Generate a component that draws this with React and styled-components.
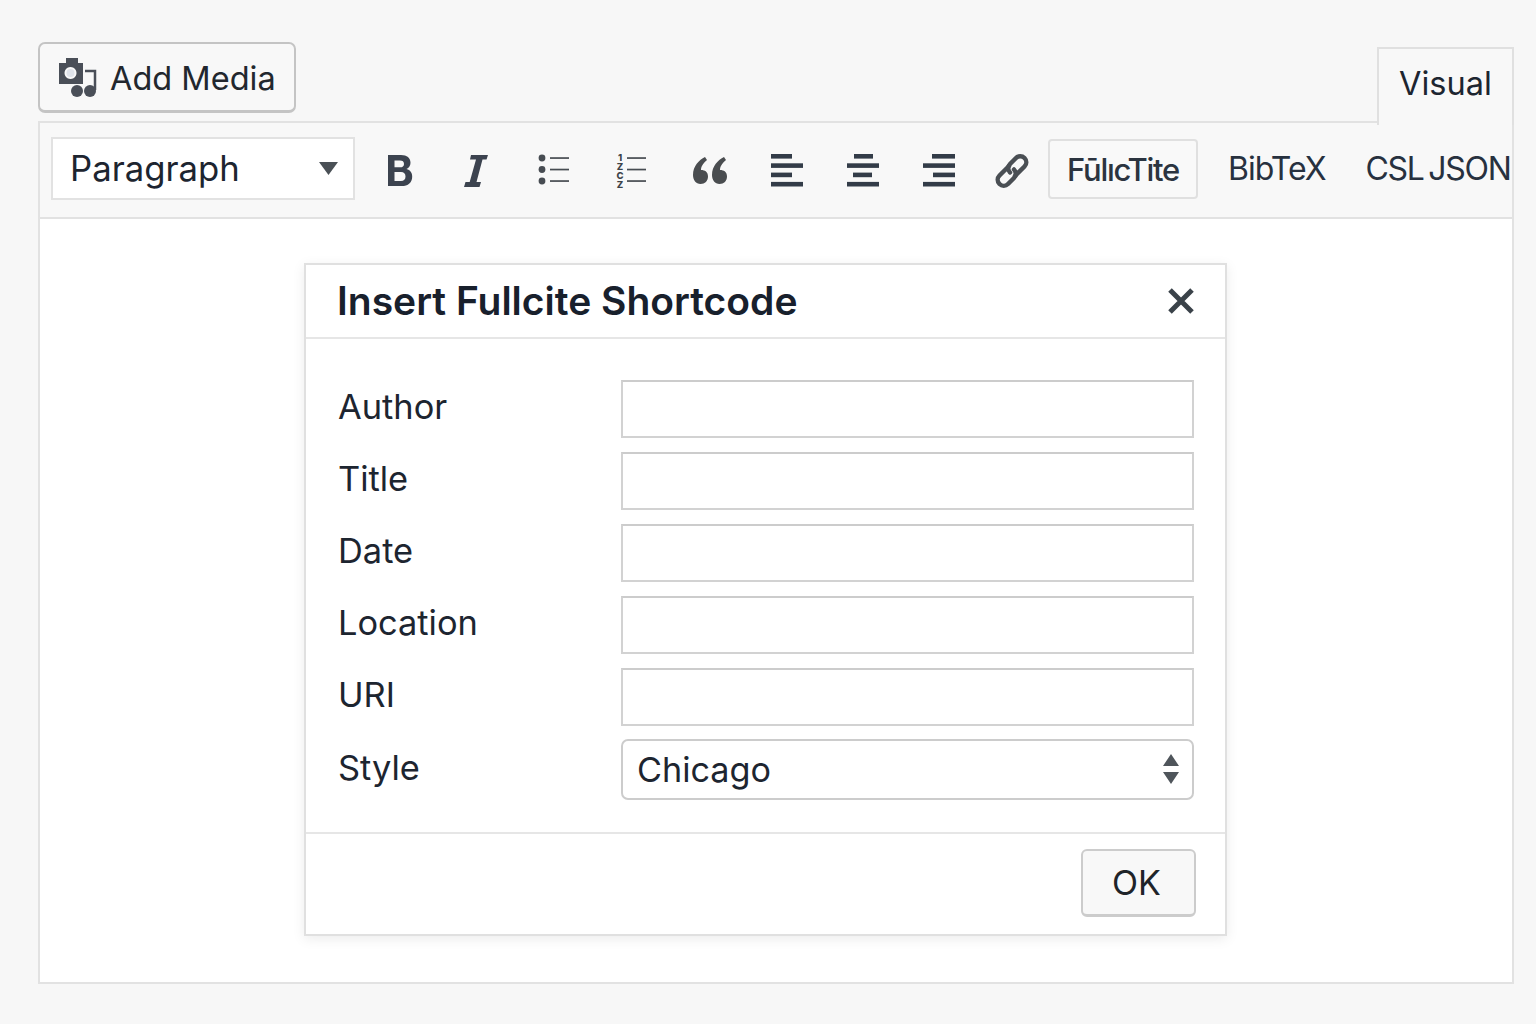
import React from "react";
import styled, { createGlobalStyle } from "styled-components";

const Global = createGlobalStyle`
  html, body { margin: 0; padding: 0; background: #f7f7f7; }
  body { font-family: Inter, "Liberation Sans", sans-serif; color: #1d2530; }
  * { box-sizing: border-box; }
`;

const Page = styled.div`
  width: 1536px;
  height: 1024px;
  padding: 42px 22px 0 38px;
  background: #f7f7f7;
  overflow: hidden;
`;
const TopRow = styled.div`
  display: flex;
  justify-content: space-between;
  align-items: flex-start;
  height: 79px;
`;
const MediaButton = styled.button`
  width: 258px;
  height: 71px;
  display: flex;
  align-items: center;
  gap: 12px;
  padding: 2px 0 0 18px;
  background: #f8f8f8;
  border: 2px solid #c4c4c4;
  border-bottom-width: 3px;
  border-radius: 7px;
  font: 400 32.5px Inter, sans-serif;
  color: #22272e;
`;
const Tab = styled.div`
  position: relative;
  z-index: 1;
  width: 137px;
  height: 78px;
  margin-top: 5px;
  padding: 14px 0 0 20px;
  background: #f8f8f8;
  border: 2px solid #e0e0e0;
  border-bottom: none;
  font-size: 32.5px;
  line-height: 42px;
  color: #1d2530;
`;
const Editor = styled.div`
  height: 863px;
  background: #fff;
  border: 2px solid #e2e2e2;
`;
const Toolbar = styled.div`
  height: 96px;
  display: flex;
  align-items: center;
  padding: 2px 0 2px 11px;
  background: #f8f8f8;
  border-bottom: 2px solid #e2e2e2;
`;
const FormatSelect = styled.div`
  flex: none;
  width: 304px;
  height: 63px;
  margin-top: -4px;
  display: flex;
  align-items: center;
  justify-content: space-between;
  padding: 0 15px 0 17px;
  background: #fff;
  border: 2px solid #e2e2e2;
  font-size: 34.7px;
  color: #1d2530;
`;
const Icons = styled.div`
  flex: none;
  display: flex;
  align-items: center;
  margin-left: 7px;
`;
const IconSlot = styled.div`
  width: ${(p) => p.$w}px;
  height: 40px;
  display: flex;
  align-items: center;
  justify-content: center;
  margin-top: 2px;
`;
const FullciteButton = styled.div`
  flex: none;
  width: 150px;
  height: 60px;
  display: flex;
  align-items: center;
  justify-content: center;
  background: #f9f9f9;
  border: 2px solid #e0e0e0;
  border-radius: 4px;
  font-size: 31px;
  font-weight: 500;
  letter-spacing: -1.3px;
  color: #2b3440;
  padding-top: 2px;
  margin-top: -3px;
`;
const TextTool = styled.div`
  flex: none;
  margin-left: ${(p) => p.$ml}px;
  font-size: 32px;
  letter-spacing: ${(p) => p.$ls}px;
  word-spacing: -3px;
  color: #27313f;
  white-space: nowrap;
  margin-top: -4px;
`;
const Content = styled.div`
  padding: 44px 0 0 264px;
`;
const Modal = styled.div`
  width: 923px;
  height: 673px;
  display: flex;
  flex-direction: column;
  background: #fff;
  border: 2px solid #e0e0e0;
  box-shadow: 0 3px 12px rgba(0, 0, 0, 0.08);
`;
const ModalHeader = styled.div`
  height: 74px;
  display: flex;
  align-items: center;
  justify-content: space-between;
  padding: 0 30px 0 31px;
  border-bottom: 2px solid #e6e6e6;
`;
const ModalTitle = styled.h2`
  margin: -2px 0 0;
  font-size: 39px;
  font-weight: 600;
  color: #18202c;
`;
const ModalBody = styled.div`
  flex: 1;
  display: flex;
  flex-direction: column;
  gap: 14px;
  padding: 41px 31px 0 32px;
`;
const Row = styled.div`
  display: grid;
  grid-template-columns: 283px 573px;
  align-items: center;
  height: ${(p) => p.$h || 58}px;
  margin-top: ${(p) => p.$mt || 0}px;
`;
const Label = styled.label`
  font-size: 34.4px;
  color: #1d2530;
  margin-top: -5px;
`;
const Input = styled.input`
  width: 573px;
  height: 58px;
  background: #fff;
  border: 2px solid #d2d2d2;
  border-top-color: #cccccc;
  outline: none;
`;
const StyleSelect = styled.div`
  width: 573px;
  height: 61px;
  display: flex;
  align-items: center;
  justify-content: space-between;
  padding: 0 13px 0 14px;
  background: #fff;
  border: 2px solid #cccccc;
  border-radius: 7px;
  font-size: 34.2px;
  color: #1d2530;
`;
const ModalFooter = styled.div`
  height: 102px;
  display: flex;
  align-items: flex-start;
  justify-content: flex-end;
  padding: 15px 29px 0 0;
  border-top: 2px solid #e6e6e6;
`;
const OkButton = styled.button`
  width: 115px;
  height: 68px;
  padding: 0 4px 0 0;
  background: #f8f8f8;
  border: 2px solid #cccccc;
  border-bottom-width: 3px;
  border-radius: 6px;
  font: 400 34px Inter, sans-serif;
  color: #1f2429;
`;

const MediaIcon = () => (
  <svg width="40" height="40" viewBox="0 0 40 40">
    <path fill="#4a4f58" fillRule="evenodd" d="M8 0h12v5h5v21H1V5h7zM12.5 9a6 6 0 1 0 .01 0z" />
    <circle cx="12.5" cy="15" r="4" fill="#dfe3ea" />
    <path fill="none" stroke="#4a4f58" strokeWidth="2.5" d="M27 13h10v19" />
    <circle cx="19" cy="33" r="6" fill="#4a4f58" />
    <circle cx="32" cy="33" r="6" fill="#4a4f58" />
  </svg>
);
const Caret = () => (
  <svg width="19" height="13" viewBox="0 0 19 13"><path fill="#4a5056" d="M0 0h19l-9.500 13z" /></svg>
);
const BoldIcon = () => (
  <svg width="26" height="34" viewBox="0 0 26 34">
    <path fill="#3c434f" fillRule="evenodd" d="M1 1h13c6 0 9.500 3 9.500 7.800 0 3-1.500 5.200-4 6.300 3.700.9 5.700 3.700 5.700 7.300 0 6-4 9.600-10.700 9.600H1zM7.500 6.500v6.800H13c2.600 0 4-1.200 4-3.400s-1.400-3.400-4-3.400zM7.500 18v9H14c2.900 0 4.500-1.600 4.500-4.500S16.900 18 14 18z" />
  </svg>
);
const ItalicIcon = () => (
  <svg width="26" height="34" viewBox="0 0 26 34">
    <path fill="#3c434f" d="M8 1h17l-1.500 4.500h-4L13.500 28h4.500L16.500 33H1l1.500-5h4.200l6.300-22.500H7z" />
  </svg>
);
const BulletIcon = () => (
  <svg width="34" height="34" viewBox="0 0 34 34">
    {[4, 15.5, 27].map((y) => <circle key={y} cx="5" cy={y} r="3.400" fill="#474c52" />)}
    {[4, 15.5, 27].map((y) => <rect key={y} x="13" y={y - 0.8} width="19" height="1.700" fill="#474c52" />)}
  </svg>
);
const NumberIcon = () => (
  <svg width="34" height="38" viewBox="0 -2 34 38">
    {["1", "Z", "C", "Z"].map((c, i) => (
      <text key={i} x="5" y={7 + i * 9} textAnchor="middle" fontSize="9.500" fontWeight="800" fontFamily="Inter, sans-serif" fill="#3d4349">{c}</text>
    ))}
    {[4, 15.5, 27].map((y) => <rect key={y} x="12" y={y - 0.8} width="19" height="1.700" fill="#474c52" />)}
  </svg>
);
const QuoteIcon = () => (
  <svg width="36" height="30" viewBox="0 0 36 30">
    <path fill="#4a4d50" d="M13 1C7 4 1 10 1 19c0 5 3 9 7.500 9S16 25 16 20.500 13 14 9 14c0-4 3-7.500 6-10zM32 1c-6 3-12 9-12 18 0 5 3 9 7.500 9s7.500-3 7.500-7.500S32 14 28 14c0-4 3-7.500 6-10z" />
  </svg>
);
const AlignIcon = ({ bars }) => (
  <svg width="32" height="34" viewBox="0 0 32 34">
    {bars.map(([x, w], i) => <rect key={i} x={x} y={i * 9.3} width={w} height="4.600" fill="#333c48" />)}
  </svg>
);
const LinkIcon = () => (
  <svg width="36" height="36" viewBox="0 0 36 36" fill="none" stroke="#4a4f54" strokeWidth="4.500" strokeLinecap="round">
    <path d="M15 13 5.500 22.500a6 6 0 0 0 8.500 8.500l6-6a6 6 0 0 0 0-8.500" />
    <path d="M21 23l9.500-9.500A6 6 0 0 0 22 5l-6 6a6 6 0 0 0 0 8.500" />
  </svg>
);
const CloseIcon = () => (
  <svg width="28" height="28" viewBox="0 0 28 28" stroke="#3a4249" strokeWidth="5">
    <path d="M3 3l22 22M25 3L3 25" />
  </svg>
);
const StepIcon = () => (
  <svg width="16" height="31" viewBox="0 0 16 31">
    <path fill="#4f555b" d="M8 0l8 12H0zM0 18h16l-8 12z" />
  </svg>
);

const fields = ["Author", "Title", "Date", "Location", "URI"];

export default function App() {
  return (
    <Page>
      <Global />
      <TopRow>
        <MediaButton><MediaIcon />Add Media</MediaButton>
        <Tab>Visual</Tab>
      </TopRow>
      <Editor>
        <Toolbar>
          <FormatSelect>Paragraph<Caret /></FormatSelect>
          <Icons>
            <IconSlot $w={76}><BoldIcon /></IconSlot>
            <IconSlot $w={76}><ItalicIcon /></IconSlot>
            <IconSlot $w={80}><BulletIcon /></IconSlot>
            <IconSlot $w={76}><NumberIcon /></IconSlot>
            <IconSlot $w={80}><QuoteIcon /></IconSlot>
            <IconSlot $w={74}><AlignIcon bars={[[0, 21], [0, 32], [0, 21], [0, 32]]} /></IconSlot>
            <IconSlot $w={78}><AlignIcon bars={[[7, 19], [0, 32], [6, 19], [0, 32]]} /></IconSlot>
            <IconSlot $w={74}><AlignIcon bars={[[9, 23], [0, 32], [10, 22], [0, 32]]} /></IconSlot>
            <IconSlot $w={72}><LinkIcon /></IconSlot>
          </Icons>
          <FullciteButton>FūlıcTite</FullciteButton>
          <TextTool $ml={30} $ls={-1}>BibTeX</TextTool>
          <TextTool $ml={40} $ls={-1.3}>CSL JSON</TextTool>
        </Toolbar>
        <Content>
          <Modal>
            <ModalHeader>
              <ModalTitle>Insert Fullcite Shortcode</ModalTitle>
              <CloseIcon />
            </ModalHeader>
            <ModalBody>
              {fields.map((f) => (
                <Row key={f}>
                  <Label>{f}</Label>
                  <Input />
                </Row>
              ))}
              <Row $h={61} $mt={-1}>
                <Label>Style</Label>
                <StyleSelect>Chicago<StepIcon /></StyleSelect>
              </Row>
            </ModalBody>
            <ModalFooter><OkButton>OK</OkButton></ModalFooter>
          </Modal>
        </Content>
      </Editor>
    </Page>
  );
}
